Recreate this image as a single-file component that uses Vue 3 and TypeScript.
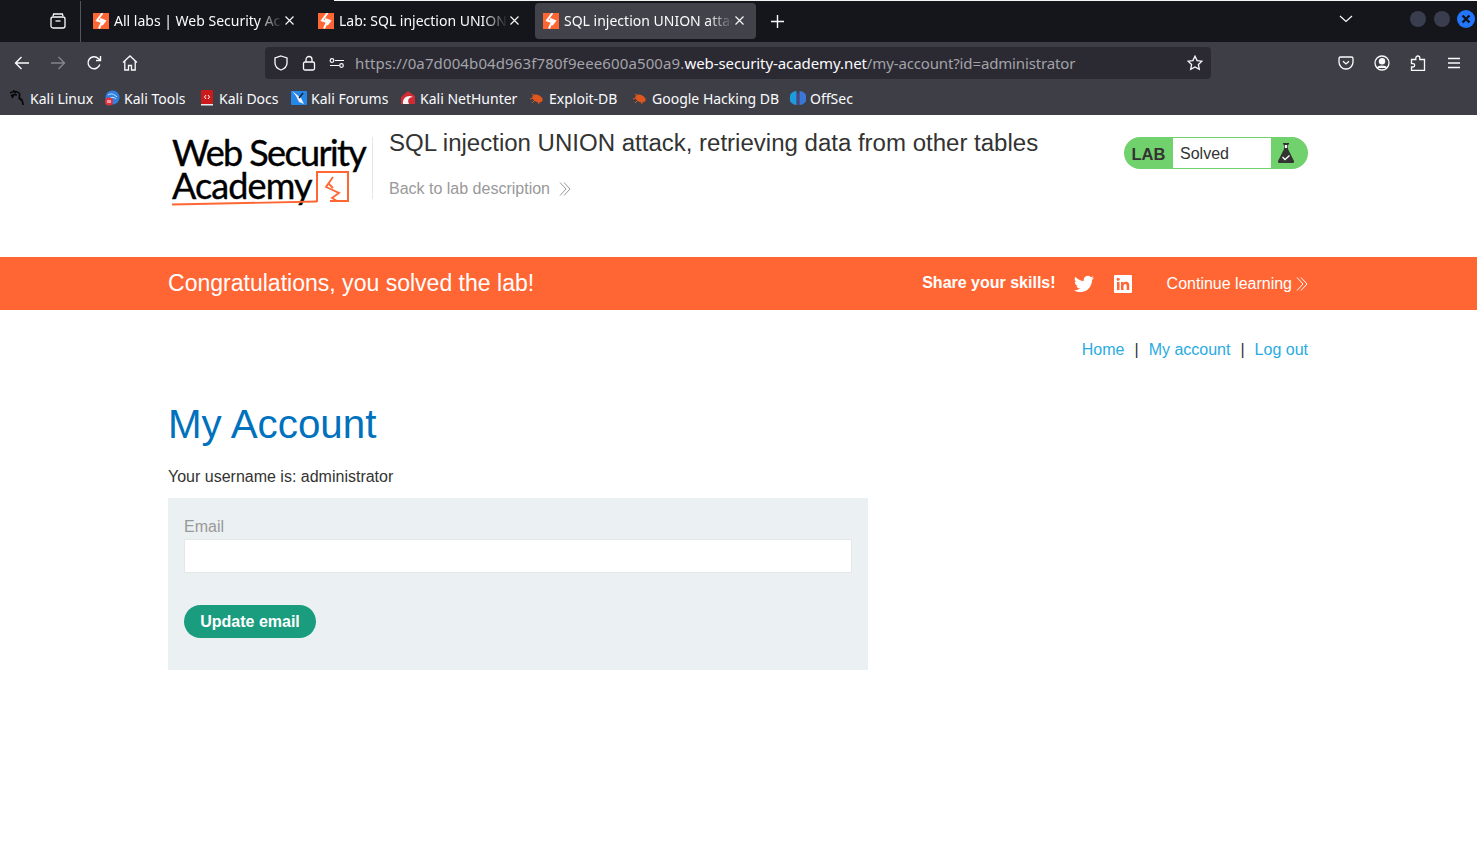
<script setup lang="ts">
const tabs = [
  { title: 'All labs | Web Security Academy', active: false },
  { title: 'Lab: SQL injection UNION attack', active: false },
  { title: 'SQL injection UNION attack, retr', active: true },
]
</script>

<template>
  <div class="page">
    <div class="tabbar">
      <div class="tabs-btn">
        <svg width="16" height="16" viewBox="0 0 16 16" fill="none" stroke="#fbfbfe" stroke-width="1.3"><path d="M3 3.200 3.600 1h8.800l.6 2.200"/><rect x="1" y="4" width="14" height="11" rx="2"/><path d="M5.500 8h5"/></svg>
      </div>
      <div class="tab-list">
        <div v-for="t in tabs" :key="t.title" class="tab" :class="{ active: t.active }">
          <svg class="fav" width="16" height="16" viewBox="0 0 16 16"><rect width="16" height="16" fill="#ff6633"/><path d="M9.500 0 4 7.500 9 9 6 15.500M7 6l5 2-3 4" fill="none" stroke="#fff" stroke-width="2"/></svg>
          <span class="tab-title">{{ t.title }}</span>
          <svg class="close" width="9" height="9" viewBox="0 0 9 9" stroke="#fbfbfe" stroke-width="1.1"><path d="M.5 .5l8 8M8.500 .5l-8 8"/></svg>
        </div>
        <svg class="plus" width="13" height="13" viewBox="0 0 13 13" stroke="#fbfbfe" stroke-width="1.4"><path d="M6.500 0v13M0 6.500h13"/></svg>
      </div>
      <svg class="chev" width="14" height="8" viewBox="0 0 14 8" fill="none" stroke="#fbfbfe" stroke-width="1.2"><path d="M1 1l6 5.500L13 1"/></svg>
      <div class="winbtns">
        <i class="dot"></i><i class="dot"></i>
        <i class="dot blue"><svg width="10" height="10" viewBox="0 0 10 10" stroke="#10131c" stroke-width="2.4"><path d="M1.500 1.500l7 7M8.500 1.500l-7 7"/></svg></i>
      </div>
    </div>

    <div class="toolbar">
      <div class="nav-btns">
        <svg width="16" height="16" viewBox="0 0 16 16" fill="none" stroke="#fbfbfe" stroke-width="1.4"><path d="M15 8H1.500M7.500 2 1.500 8l6 6"/></svg>
        <svg width="16" height="16" viewBox="0 0 16 16" fill="none" stroke="#85868b" stroke-width="1.4"><path d="M1 8h13.500M8.500 2l6 6-6 6"/></svg>
        <svg width="16" height="16" viewBox="0 0 16 16" fill="none" stroke="#fbfbfe" stroke-width="1.4"><path d="M13.800 9.500A6 6 0 1 1 12.300 3.500L14.500 5.500M14.500 1v4.500H10"/></svg>
        <svg width="16" height="16" viewBox="0 0 16 16" fill="none" stroke="#fbfbfe" stroke-width="1.3"><path d="M1 7.500 8 1l7 6.500M2.800 6.200V15h3.700v-4.500h3V15h3.700V6.200"/></svg>
      </div>
      <div class="urlbar">
        <svg width="16" height="16" viewBox="0 0 16 16" fill="none" stroke="#fbfbfe" stroke-width="1.3"><path d="M8 1l6 2v5c0 3.500-2.800 5.800-6 7-3.200-1.200-6-3.500-6-7V3z"/></svg>
        <svg width="16" height="16" viewBox="0 0 16 16" fill="none" stroke="#fbfbfe" stroke-width="1.3"><rect x="2.500" y="7" width="11" height="8" rx="1.500"/><path d="M5 7V4.500a3 3 0 0 1 6 0V7"/></svg>
        <svg width="16" height="12" viewBox="0 0 16 12" fill="none" stroke="#fbfbfe" stroke-width="1.200"><path d="M6 3.500h9M1 8.500h9"/><circle cx="3" cy="3.500" r="1.800"/><circle cx="12.500" cy="8.500" r="1.800"/></svg>
        <span class="url"><span class="url-sub">https://0a7d004b04d963f780f9eee600a500a9.</span><b>web-security-academy.net</b><span class="url-path">/my-account?id=administrator</span></span>
        <svg class="star" width="16" height="16" viewBox="0 0 16 16" fill="none" stroke="#fbfbfe" stroke-width="1.300"><path d="M8 1.200l2.100 4.400 4.800.6-3.500 3.300.9 4.800L8 12l-4.300 2.300.9-4.800L1.100 6.200l4.800-.6z"/></svg>
      </div>
      <div class="tool-btns">
        <svg width="16" height="16" viewBox="0 0 16 16" fill="none" stroke="#fbfbfe" stroke-width="1.300"><path d="M2.500 2h11A1.500 1.500 0 0 1 15 3.500V7a7 7 0 0 1-14 0V3.500A1.500 1.500 0 0 1 2.500 2z"/><path d="M5 6.300l3 2.700 3-2.700"/></svg>
        <svg width="16" height="16" viewBox="0 0 16 16" fill="none" stroke="#fbfbfe" stroke-width="1.300"><circle cx="8" cy="8" r="7"/><circle cx="8" cy="6.300" r="2.600" fill="#fbfbfe"/><path d="M3.500 13c1-2.500 8-2.500 9 0" fill="#fbfbfe"/></svg>
        <svg width="16" height="16" viewBox="0 0 16 16" fill="none" stroke="#fbfbfe" stroke-width="1.300"><path d="M1.500 15.500V12H3a1.700 1.700 0 0 0 0-3.400H1.500V4.500h4.300V3a2 2 0 0 1 4 0v1.500h4.700v11z"/></svg>
        <svg class="menu" width="14" height="12" viewBox="0 0 14 12" stroke="#fbfbfe" stroke-width="1.300"><path d="M1 1.500h12M1 6h12M1 10.500h12"/></svg>
      </div>
    </div>

    <div class="bookmarks">
      <span class="bm">
        <svg width="16" height="16" viewBox="0 0 16 16" fill="none" stroke="#08080a" stroke-width="1.700"><path d="M0 3c3-1.500 7-2 9 0s-1 4 1 5.500 3 2.500 3 6.500M3 .5l3 2.500M1 6c2-1.500 4-1.500 6-1M8.500 9c1.500-.5 3 0 4 1.500M3.500 5.500 2 8"/></svg>Kali Linux</span>
      <span class="bm">
        <svg width="16" height="16" viewBox="0 0 16 16"><circle cx="8.500" cy="7.500" r="7" fill="#2f80e0"/><path d="M4 5c3-2 6-1 9 2M6 8c2-1 4-1 6 1" stroke="#cfe4ff" fill="none"/><circle cx="5" cy="11.500" r="4" fill="#e0323c"/><path d="M4 10v3M6 10v3" stroke="#fff"/></svg>Kali Tools</span>
      <span class="bm">
        <svg width="16" height="16" viewBox="0 0 16 16"><rect x="2" y="0" width="12" height="14" rx="1" fill="#cc1a1a"/><rect x="2" y="14" width="12" height="1.500" fill="#e8e8e8"/><path d="M7 5 5.500 7 7 9M9 5l1.500 2L9 9" stroke="#fff" fill="none"/></svg>Kali Docs</span>
      <span class="bm">
        <svg width="16" height="16" viewBox="0 0 16 16"><rect y="1" width="16" height="14" rx="1" fill="#2487ea"/><path d="M1 1l9 7 3 6-5-2-3-6z" fill="#f2f2f2"/><path d="M8 8l4-5" stroke="#10243a" stroke-width="1.500"/></svg>Kali Forums</span>
      <span class="bm">
        <svg width="16" height="16" viewBox="0 0 16 16"><path d="M1 7 8 1l7 5v8H1z" fill="#d02a35"/><path d="M3 14C2 8 8 4 13 7 9 7 7 10 9 14z" fill="#f5f5f5"/></svg>Kali NetHunter</span>
      <span class="bm">
        <svg width="16" height="16" viewBox="0 0 16 16"><ellipse cx="8.500" cy="8.500" rx="5.500" ry="3.500" fill="#e0561f" transform="rotate(25 8.500 8.500)"/><path d="M1 9l4-1M3 13l3-3M10 14l-1-3M3 4l3 2" stroke="#e0561f"/></svg>Exploit-DB</span>
      <span class="bm">
        <svg width="16" height="16" viewBox="0 0 16 16"><ellipse cx="8.500" cy="8.500" rx="5.500" ry="3.500" fill="#e0561f" transform="rotate(25 8.500 8.500)"/><path d="M1 9l4-1M3 13l3-3M10 14l-1-3M3 4l3 2" stroke="#e0561f"/></svg>Google Hacking DB</span>
      <span class="bm">
        <svg width="16" height="16" viewBox="0 0 16 16"><path d="M6.500 1a7 7 0 0 0 0 14z" fill="#1e9bdc"/><path d="M9.500 1a7 7 0 0 1 0 14z" fill="#3a78d8"/><path d="M8 3v12" stroke="#6a3fd0"/></svg>OffSec</span>
    </div>

    <div class="site">
      <header class="lab-head">
        <div class="logo">
          <div class="logo-text">Web Security<br><span class="logo-second">Academy</span></div>
          <svg class="logo-mark" width="200" height="72" viewBox="0 0 200 72" fill="none" stroke="#ff6633">
            <path d="M4 67.500c50-1 100-2 145-3" stroke-width="1.800"/>
            <path d="M149 65V35h31v29h-18" stroke-width="2"/>
            <path d="M165 40l-7 10 13 6-7 5 5 3M160 46l5 5" stroke-width="1.800"/>
          </svg>
        </div>
        <div class="lab-title">
          <h2>SQL injection UNION attack, retrieving data from other tables</h2>
          <a class="back">Back to lab description
            <svg width="12" height="14" viewBox="0 0 12 14" fill="none" stroke="#999" stroke-width="1"><path d="M1 .5 7 7l-6 6.500M5 .5 11 7l-6 6.500"/></svg>
          </a>
        </div>
        <div class="status">
          <span class="status-lab">LAB</span>
          <span class="status-text">Solved</span>
          <span class="status-icon">
            <svg width="18" height="22" viewBox="0 0 18 22"><path d="M6 1h6v1.500h-1V7l6 12a1.500 1.500 0 0 1-1.300 2H2.300A1.500 1.500 0 0 1 1 19L7 7V2.500H6z" fill="#333332"/><path d="M7.800 3h2.400v3H7.800z" fill="#fff"/><path d="M5.500 15l2.500 2.500 4.500-4" fill="none" stroke="#fff" stroke-width="1.300"/></svg>
          </span>
        </div>
      </header>

      <div class="banner">
        <div class="banner-in">
          <h4>Congratulations, you solved the lab!</h4>
          <div class="share">
            <span class="share-label">Share your skills!</span>
            <svg width="20" height="20" viewBox="0 0 24 24" fill="#fff"><path d="M23.950 4.570a10 10 0 0 1-2.820.770 4.960 4.960 0 0 0 2.160-2.720 9.900 9.900 0 0 1-3.120 1.180 4.920 4.920 0 0 0-8.380 4.480A13.950 13.950 0 0 1 1.670 3.150a4.920 4.920 0 0 0 1.520 6.570 4.900 4.900 0 0 1-2.230-.62v.06a4.920 4.920 0 0 0 3.950 4.830 5 5 0 0 1-2.210.08 4.940 4.940 0 0 0 4.600 3.420A9.870 9.870 0 0 1 0 19.540a14 14 0 0 0 7.560 2.210c9.050 0 14-7.500 14-13.980 0-.21 0-.42-.02-.63a9.940 9.940 0 0 0 2.460-2.550z"/></svg>
            <svg class="li" width="18" height="18" viewBox="0 0 18 18"><rect width="18" height="18" rx="1" fill="#fff"/><path d="M3 7h2.500v8H3zM7 7h2.400v1.200C10 7.300 11 6.800 12.200 6.800c2.200 0 3 1.400 3 3.600V15h-2.500v-4.100c0-1.100-.3-1.900-1.300-1.900s-1.900.8-1.900 2V15H7z" fill="#ff6633"/><circle cx="4.200" cy="4.300" r="1.500" fill="#ff6633"/></svg>
          </div>
          <a class="continue">Continue learning
            <svg width="12" height="14" viewBox="0 0 12 14" fill="none" stroke="#fff" stroke-width="1"><path d="M1 .5 7 7l-6 6.500M5 .5 11 7l-6 6.500"/></svg>
          </a>
        </div>
      </div>

      <main class="content">
        <nav class="site-nav">
          <a>Home</a><span>|</span><a>My account</a><span>|</span><a>Log out</a>
        </nav>
        <h1>My Account</h1>
        <p class="user">Your username is: administrator</p>
        <form class="email-form" @submit.prevent>
          <label for="email">Email</label>
          <input id="email" type="email">
          <button type="submit">Update email</button>
        </form>
      </main>
    </div>
  </div>
</template>

<style>
html, body { margin: 0; background: #fff; }
</style>

<style scoped>
.page { width: 1477px; height: 850px; overflow: hidden; font-family: "Noto Sans", sans-serif; }

.tabbar { height: 42px; background: #15161b; display: flex; align-items: center; box-sizing: border-box; position: relative; }
.tabbar::before { content: ""; position: absolute; top: 0; left: 334px; right: 0; height: 1px; background: #f4f4f4; }
.tabs-btn { height: 41px; display: flex; align-items: center; justify-content: flex-end; padding-right: 14px; box-sizing: border-box; border-right: 1px solid #55565c; flex: none; width: 81px; }
.tab-list { display: flex; align-items: center; padding-left: 4px; }
.tab { width: 221px; height: 36px; margin-right: 4px; border-radius: 4px; display: flex; align-items: center; padding: 0 12px 0 8px; box-sizing: border-box; color: #fbfbfe; font-size: 14px; }
.tab.active { background: #42434a; }
.fav { flex: none; margin-right: 5px; }
.tab-title { flex: 1; overflow: hidden; white-space: nowrap; padding-bottom: 1px; -webkit-mask-image: linear-gradient(to right, #000 85%, transparent); mask-image: linear-gradient(to right, #000 85%, transparent); }
.close { flex: none; margin: 0 0 2px 2px; }
.plus { margin-left: 11px; }
.chev { position: absolute; left: 1339px; top: 15px; }
.winbtns { position: absolute; left: 1410px; top: 11px; display: flex; gap: 8px; }
.dot { width: 16px; height: 16px; border-radius: 50%; background: #3a3d4e; display: flex; align-items: center; justify-content: center; }
.dot.blue { background: #2276fb; width: 18px; height: 18px; margin-top: -1px; margin-left: -1px; }

.toolbar { height: 41px; background: #3e3f46; display: flex; align-items: center; }
.nav-btns { display: flex; gap: 20px; padding-left: 14px; width: 265px; box-sizing: border-box; }
.urlbar { width: 946px; height: 32px; background: #2b2a33; border-radius: 4px; display: flex; align-items: center; gap: 12px; padding: 0 8px; box-sizing: border-box; }
.url { font-size: 15px; color: #a3a3a9; white-space: nowrap; margin-left: -2px; flex: 1; }
.url-sub { letter-spacing: 0.12px; }
.url b { font-weight: 400; color: #fbfbfe; letter-spacing: -0.08px; }
.url-path { letter-spacing: -0.14px; }
.tool-btns { display: flex; align-items: center; gap: 20px; padding-left: 127px; }
.menu { margin-left: 1px; }

.bookmarks { height: 32px; background: #3e3f46; display: flex; align-items: center; padding: 0 0 2px 10px; box-sizing: border-box; color: #fbfbfe; font-size: 14px; }
.bm { display: flex; align-items: center; gap: 4px; white-space: nowrap; flex: none; }
.bm:nth-child(1) { width: 94px; }
.bm:nth-child(2) { width: 95px; }
.bm:nth-child(3) { width: 92px; }
.bm:nth-child(4) { width: 109px; }
.bm:nth-child(5) { width: 129px; }
.bm:nth-child(6) { width: 103px; }
.bm:nth-child(7) { width: 158px; }

.site { font-family: "Liberation Sans", Arial, sans-serif; color: #333332; font-size: 16px; }
.lab-head { width: 1140px; height: 142px; margin-left: 168px; display: flex; padding-top: 22px; box-sizing: border-box; align-items: flex-start; }
.logo { width: 204px; height: 62px; border-right: 1px solid #e6e6e6; margin-right: 16px; flex: none; position: relative; }
.logo-text { font-family: Lato, sans-serif; font-size: 36px; line-height: 33px; letter-spacing: -1.600px; color: #000; -webkit-text-stroke: 0.4px #000; padding-left: 4px; margin-top: -1px; white-space: nowrap; }
.logo-second { letter-spacing: -0.900px; }
.logo-mark { position: absolute; left: 0; top: 0; }
.lab-title { flex: 1; margin-top: -9px; }
.lab-title h2 { margin: 0; font-weight: 400; font-size: 24.030px; line-height: 30px; color: #333332; }
.back { display: flex; align-items: center; gap: 9px; color: #999; margin-top: 22px; }
.status { width: 184px; height: 32px; border-radius: 16px; background: #70d16d; display: flex; align-items: stretch; overflow: hidden; flex: none; }
.status-lab { width: 49px; display: flex; align-items: center; justify-content: center; font-weight: 700; font-size: 16.500px; color: #333332; padding-top: 2px; box-sizing: border-box; }
.status-text { width: 98px; margin: 1px 0; background: #fff; padding: 1px 0 0 7px; box-sizing: border-box; display: flex; align-items: center; }
.status-icon { flex: 1; display: flex; align-items: center; justify-content: flex-start; padding-left: 6px; }

.banner { height: 53px; background: #ff6633; color: #fff; }
.banner-in { width: 1140px; margin-left: 168px; height: 100%; display: flex; align-items: center; }
.banner-in h4 { margin: 0; font-weight: 400; font-size: 23.040px; flex: 1; }
.share { display: flex; align-items: center; }
.share-label { font-weight: 700; margin: 0 18px 2px 0; }
.li { margin-left: 20px; }
.continue { display: flex; align-items: center; gap: 4px; margin-left: 35px; }

.content { width: 1140px; margin-left: 168px; }
.site-nav { display: flex; justify-content: flex-end; gap: 10px; margin-top: 30px; height: 20px; line-height: 20px; }
.site-nav a { color: #29abe2; }
.site-nav span { color: #333332; }
h1 { margin: 0; font-weight: 400; font-size: 40.320px; line-height: 48px; color: #0071bc; padding-top: 40px; }
.user { margin: 19px 0 0; line-height: 20px; }
.email-form { width: 700px; height: 172px; margin-top: 11px; background: #ebf0f2; padding: 19px 16px 0; box-sizing: border-box; display: flex; flex-direction: column; align-items: flex-start; }
.email-form label { color: #999; line-height: 20px; margin-bottom: 2px; }
.email-form input { width: 100%; height: 34px; box-sizing: border-box; background: #fff; border: 1px solid #e6e6e6; margin: 0; }
.email-form button { margin-top: 32px; height: 33px; width: 132px; border: 0; border-radius: 17px; background: #1a9c7f; color: #fff; font: 700 16px "Liberation Sans", Arial, sans-serif; padding: 0; }
</style>
